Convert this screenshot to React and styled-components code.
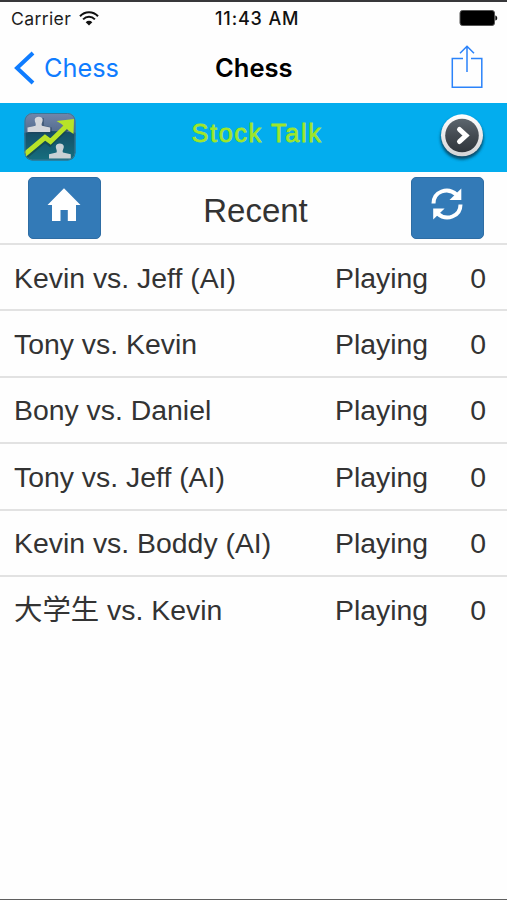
import styled, { createGlobalStyle } from 'styled-components'

const GlobalStyle = createGlobalStyle`
  * {
    box-sizing: border-box;
  }

  body {
    margin: 0;
    background: #fefefe;
    font-family: "Liberation Sans", Arial, "Noto Sans CJK SC", sans-serif;
    color: #333;
  }

  svg {
    display: block;
  }
`

const Screen = styled.div`
  height: 900px;
  border-top: 2px solid #38383a;
  border-bottom: 1px solid #5f5f5f;
  overflow: hidden;
`

const StatusBar = styled.div`
  display: grid;
  grid-template-columns: 204px auto 1fr;
  align-items: center;
  height: 32px;
  padding: 0 9px 0 11px;
  font-family: Inter, sans-serif;
  font-size: 17.6px;
  color: #1c1c1c;
`

const Carrier = styled.div`
  display: flex;
  align-items: center;
  gap: 8px;
  letter-spacing: 0.35px;
`

const Clock = styled.div`
  font-weight: 500;
  font-size: 18px;
  letter-spacing: 0.85px;
  color: #111;
`

const Battery = styled.div`
  justify-self: end;
`

const NavBar = styled.header`
  display: grid;
  grid-template-columns: 201px auto 1fr;
  align-items: center;
  height: 69px;
  padding: 0 24px 2px 14px;
  font-family: Inter, sans-serif;
`

const BackButton = styled.button`
  display: flex;
  align-items: center;
  gap: 9px;
  justify-self: start;
  padding: 0;
  border: none;
  background: none;
  font: inherit;
  font-size: 25.3px;
  color: #0f7cff;
`

const NavTitle = styled.h1`
  margin: 0;
  font-size: 25.5px;
  font-weight: 600;
  color: #000;
`

const ShareButton = styled.button`
  justify-self: end;
  padding: 0 0 2px;
  border: none;
  background: none;
`

const Banner = styled.div`
  display: flex;
  justify-content: space-between;
  height: 69px;
  padding: 9px 20px 0 23px;
  background: #03adee;
`

const BannerText = styled.div`
  padding: 7px 0 0;
  font-size: 25.3px;
  line-height: 28px;
  letter-spacing: 1.6px;
  color: #9ee62b;
  -webkit-text-stroke: 0.8px #9ee62b;
`

const Toolbar = styled.div`
  display: flex;
  align-items: flex-start;
  justify-content: space-between;
  height: 71px;
  padding: 5px 23.5px 0 27.5px;
`

const ToolButton = styled.button`
  display: flex;
  justify-content: center;
  width: 73px;
  height: 62px;
  padding: 10px 0 0;
  border: 1px solid #2e6da4;
  border-radius: 5px;
  background: #337ab7;
`

const ToolbarTitle = styled.h2`
  margin: 0;
  padding-top: 15px;
  font-size: 33px;
  line-height: 38px;
  font-weight: 400;
`

const GameList = styled.ul`
  margin: 0;
  padding: 0;
  list-style: none;
`

const GameRow = styled.li`
  display: grid;
  grid-template-columns: 321px 1fr auto;
  align-items: center;
  height: 66.4px;
  padding: 1px 21px 0 14px;
  border-top: 2px solid #e2e2e2;
  font-size: 28.4px;
  line-height: 34px;
  white-space: nowrap;
`

const games = [
  { players: 'Kevin vs. Jeff (AI)', status: 'Playing', score: 0 },
  { players: 'Tony vs. Kevin', status: 'Playing', score: 0 },
  { players: 'Bony vs. Daniel', status: 'Playing', score: 0 },
  { players: 'Tony vs. Jeff (AI)', status: 'Playing', score: 0 },
  { players: 'Kevin vs. Boddy (AI)', status: 'Playing', score: 0 },
  { players: '大学生 vs. Kevin', status: 'Playing', score: 0 }
]

function WifiIcon() {
  return (
    <svg width="20" height="15" viewBox="0 0 20 15" fill="none" stroke="#111" strokeWidth="2">
      <path d="M1 5.2C6-.1 14-.1 19 5.2" />
      <path d="M4.1 8.4c3.4-3.5 8.4-3.5 11.8 0" />
      <path d="M10 14.5 6.7 11.2c1.9-1.8 4.7-1.8 6.6 0z" fill="#111" stroke="none" />
    </svg>
  )
}

function BatteryIcon() {
  return (
    <svg width="39" height="16" viewBox="0 0 39 16">
      <rect x="1" y="0.5" width="34.5" height="15" rx="2.5" fill="#000" stroke="#555" />
      <path d="M36.3 5.4c2.6.6 2.6 4.6 0 5.2z" fill="#111" />
    </svg>
  )
}

function ShareIcon() {
  return (
    <svg width="32" height="44" viewBox="0 0 32 44" fill="none" stroke="#2b83fa" strokeWidth="1.5">
      <path d="M12 13.5H1.3v28.7h29.5V13.5H20" />
      <path d="M16 27V1.5M9 8.3l7-7 7 7" />
    </svg>
  )
}

function StockIcon() {
  return (
    <svg width="54" height="50" viewBox="0 0 54 50">
      <defs>
        <linearGradient id="stockTop" x1="0" y1="0" x2="0" y2="1">
          <stop offset="0" stopColor="#7488ad" />
          <stop offset="1" stopColor="#4d6688" />
        </linearGradient>
        <linearGradient id="stockBottom" x1="0" y1="0" x2="0" y2="1">
          <stop offset="0" stopColor="#164c65" />
          <stop offset="1" stopColor="#167180" />
        </linearGradient>
        <clipPath id="stockClip">
          <rect x="1.5" y="1" width="51" height="47.5" rx="8" />
        </clipPath>
      </defs>
      <g clipPath="url(#stockClip)">
        <rect width="54" height="24" fill="url(#stockTop)" />
        <path d="M0 21q28-4 54 0v29H0z" fill="url(#stockBottom)" />
        <path d="M5 21.5v-6l8-2V6h8v7.5l8 2v6z" fill="#213b57" opacity=".45" />
        <path d="M4.5 20v-4.5l8-1.8c1-2-.8-3.5-.8-6 0-4 8-4 8 0 0 2.500-1.800 4-.8 6l8.300 1.800V20z" fill="#d4d7dc" />
        <path d="M26 46.500v-4.300l7.500-1.800c1-2-.7-3.300-.7-6 0-4 8-4 8 0 0 2.700-1.800 4-.8 6l7.800 1.800v4.300z" fill="#c9d1d5" />
        <path d="m3 44 19-16 5 4 18-17" fill="none" stroke="#14403f" strokeWidth="5" opacity=".55" />
        <path d="m1.500 42.500 20.500-17 5.500 4L43 14.500" fill="none" stroke="#b8e328" strokeWidth="5" />
        <path d="m33.500 9 17.500-2-.5 15-5-3.500-7-6.500z" fill="#b8e328" />
      </g>
      <rect x="2" y="1.5" width="50" height="46.5" rx="7.5" fill="none" stroke="#3b7796" />
    </svg>
  )
}

function NextIcon() {
  return (
    <svg width="50" height="54" viewBox="0 0 50 54">
      <defs>
        <filter id="nextShadow" x="-20%" y="-20%" width="140%" height="140%">
          <feGaussianBlur stdDeviation="1.7" />
        </filter>
        <linearGradient id="nextRing" x1="0" y1="0" x2="0" y2="1">
          <stop offset="0" stopColor="#fff" />
          <stop offset="1" stopColor="#d4d4d6" />
        </linearGradient>
        <linearGradient id="nextFace" x1="0" y1="0" x2="0" y2="1">
          <stop offset="0" stopColor="#5c666e" />
          <stop offset=".5" stopColor="#444b52" />
          <stop offset="1" stopColor="#30363c" />
        </linearGradient>
      </defs>
      <circle cx="25" cy="26" r="21.5" fill="#07384f" opacity=".85" filter="url(#nextShadow)" />
      <circle cx="25" cy="23.3" r="21" fill="url(#nextRing)" />
      <circle cx="25" cy="23.5" r="16.8" fill="url(#nextFace)" />
      <path d="m22.500 17.500 6.500 6-6.500 6" fill="none" stroke="#fff" strokeWidth="5" strokeLinecap="round" />
    </svg>
  )
}

function HomeIcon() {
  return (
    <svg width="34" height="34" viewBox="0 0 34 34" fill="#fff">
      <path d="M17 .3 33.500 17H29v16H20.800V22h-7.300v11H5V17H.5z" />
    </svg>
  )
}

function RefreshIcon() {
  return (
    <svg width="32" height="32" viewBox="0 0 32 32">
      <path d="M2.500 15.500C2.500 3.500 16.500-1.500 25.500 6.500" fill="none" stroke="#fff" strokeWidth="4" />
      <path d="M30.300.6v11.400H18.500z" fill="#fff" />
      <path d="M29.500 16.500C29.500 28.500 15.500 33.500 6.500 25.500" fill="none" stroke="#fff" strokeWidth="4" />
      <path d="M2.200 31.500V20.500h11.400z" fill="#fff" />
    </svg>
  )
}

function App() {
  return (
    <Screen>
      <GlobalStyle />
      <StatusBar>
        <Carrier>
          Carrier
          <WifiIcon />
        </Carrier>
        <Clock>11:43 AM</Clock>
        <Battery>
          <BatteryIcon />
        </Battery>
      </StatusBar>

      <NavBar>
        <BackButton type="button">
          <svg width="21" height="34" viewBox="0 0 21 34" fill="none" stroke="#0f7cff" strokeWidth="4">
            <path d="M19 2 3 17l16 15" />
          </svg>
          Chess
        </BackButton>
        <NavTitle>Chess</NavTitle>
        <ShareButton type="button" aria-label="Share">
          <ShareIcon />
        </ShareButton>
      </NavBar>

      <Banner>
        <StockIcon />
        <BannerText>Stock Talk</BannerText>
        <NextIcon />
      </Banner>

      <Toolbar>
        <ToolButton type="button" aria-label="Home">
          <HomeIcon />
        </ToolButton>
        <ToolbarTitle>Recent</ToolbarTitle>
        <ToolButton type="button" aria-label="Refresh">
          <RefreshIcon />
        </ToolButton>
      </Toolbar>

      <GameList>
        {games.map((game) => (
          <GameRow key={game.players}>
            <span>{game.players}</span>
            <span>{game.status}</span>
            <span>{game.score}</span>
          </GameRow>
        ))}
      </GameList>
    </Screen>
  )
}

export default App
